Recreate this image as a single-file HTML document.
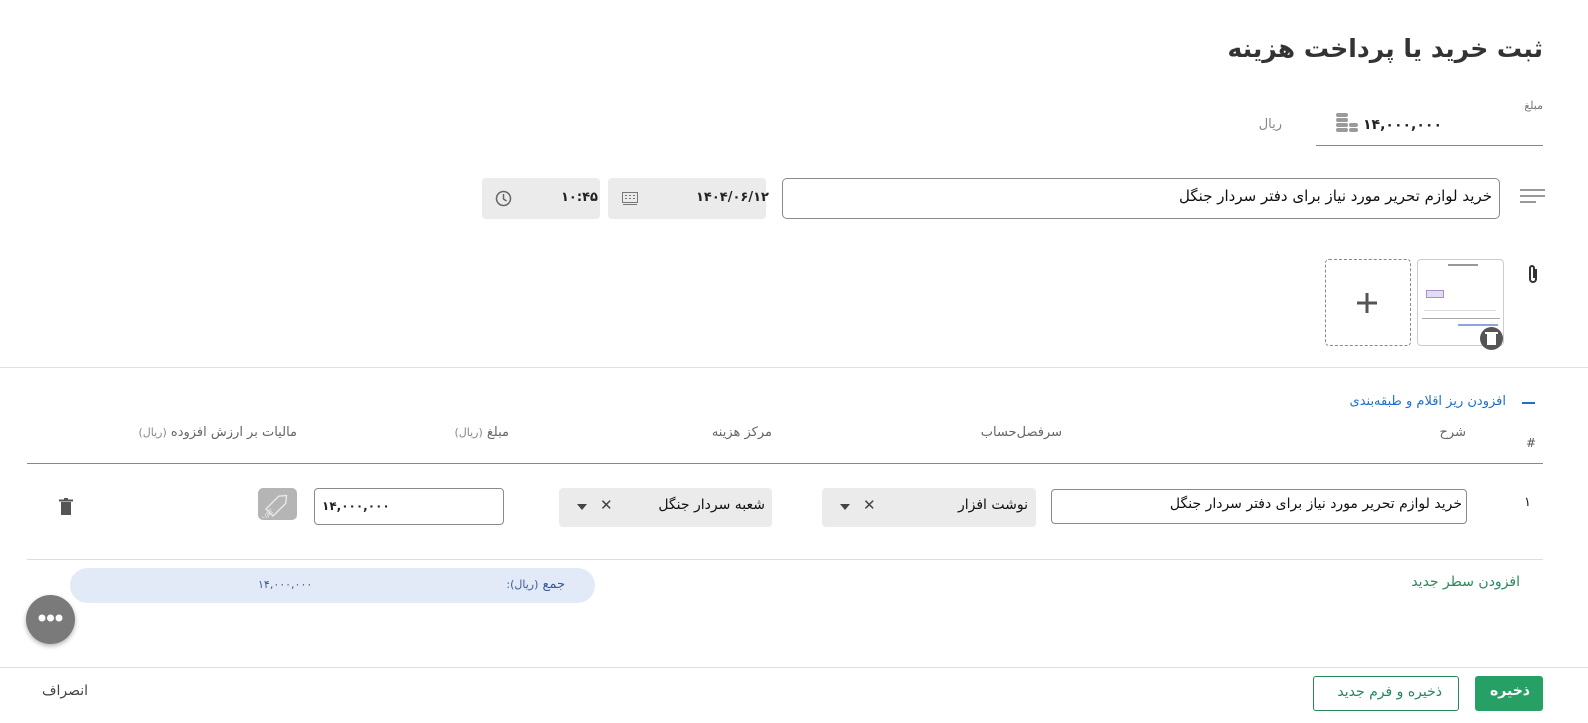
<!DOCTYPE html>
<html lang="fa" dir="rtl"><head><meta charset="utf-8">
<style>
*{box-sizing:border-box;margin:0;padding:0}
body{width:1588px;height:723px;background:#fff;font-family:"DejaVu Sans","Liberation Sans",sans-serif;color:#222;position:relative;overflow:hidden}
.a{position:absolute}
.r{direction:rtl;white-space:nowrap}
.box{position:absolute;border-radius:4px}
.gray{background:#ebebeb}
.inp{border:1px solid #8a8a8a;background:#fff}
</style></head><body>

<div class="a r" style="right:45px;top:34px;font-size:25px;font-weight:bold;color:#333">ثبت خرید یا پرداخت هزینه</div>
<div class="a r" style="right:45px;top:99px;font-size:11px;color:#777">مبلغ</div>
<div class="a" style="left:1316px;top:145px;width:227px;height:1px;background:#888"></div>
<div class="a" style="left:1363px;top:117px;font-size:14px;font-weight:bold;color:#222">۱۴,۰۰۰,۰۰۰</div>
<svg class="a" style="left:1336px;top:113px" width="22" height="20" viewBox="0 0 22 20"><g fill="#9a9a9a"><rect x="0" y="0" width="12" height="4" rx="2"/><rect x="0" y="5" width="12" height="4" rx="2"/><rect x="0" y="10" width="12" height="4" rx="2"/><rect x="0" y="15" width="12" height="4" rx="2"/><rect x="13" y="10" width="9" height="4" rx="2"/><rect x="13" y="15" width="9" height="4" rx="2"/></g></svg>
<div class="a r" style="right:306px;top:117px;font-size:13px;color:#888">ریال</div>

<svg class="a" style="left:1520px;top:189px" width="25" height="15"><g fill="#999"><rect y="0" width="25" height="2"/><rect y="6" width="25" height="2"/><rect y="12" width="16" height="2"/></g></svg>
<div class="box inp" style="left:782px;top:178px;width:718px;height:41px;border-radius:5px"></div>
<div class="a r" style="right:96px;top:187px;font-size:15px;color:#111">خرید لوازم تحریر مورد نیاز برای دفتر سردار جنگل</div>

<div class="box gray" style="left:608px;top:178px;width:158px;height:41px"></div>
<div class="a" style="left:696px;top:190px;font-size:13px;font-weight:bold">۱۴۰۴/۰۶/۱۲</div>
<svg class="a" style="left:622px;top:192px" width="16" height="14"><rect x="0.5" y="0.5" width="15" height="10" fill="none" stroke="#777"/><g fill="#777"><rect x="3" y="3" width="2" height="1"/><rect x="7" y="3" width="2" height="1"/><rect x="11" y="3" width="2" height="1"/><rect x="3" y="6" width="2" height="1"/><rect x="7" y="6" width="2" height="1"/><rect x="11" y="6" width="2" height="1"/><rect x="1" y="12" width="14" height="1"/></g></svg>
<div class="box gray" style="left:482px;top:178px;width:118px;height:41px"></div>
<div class="a" style="left:561px;top:190px;font-size:13px;font-weight:bold">۱۰:۴۵</div>
<svg class="a" style="left:495px;top:190px" width="17" height="17"><circle cx="8.5" cy="8.5" r="7" fill="none" stroke="#666" stroke-width="1.5"/><path d="M8.5 4v5l3 2" fill="none" stroke="#666" stroke-width="1.5"/></svg>

<svg class="a" style="left:1525px;top:264px" width="16" height="22" viewBox="0 0 16 22"><path d="M11 5v10a3 3 0 0 1-6 0V4a2 2 0 0 1 4 0v10" fill="none" stroke="#333" stroke-width="2"/></svg>
<div class="box" style="left:1417px;top:259px;width:87px;height:87px;border:1px solid #ccc;background:#fff;overflow:hidden">
 <div class="a" style="left:30px;top:4px;width:30px;height:2px;background:#999"></div>
 <div class="a" style="left:8px;top:30px;width:18px;height:8px;background:#e5dcf3;border:1px solid #a890c8"></div>
 <div class="a" style="left:6px;top:50px;width:72px;height:1px;background:#ddd"></div>
 <div class="a" style="left:4px;top:58px;width:78px;height:1px;background:#aaa"></div>
 <div class="a" style="left:40px;top:64px;width:40px;height:2px;background:#8aa6dd"></div>
</div>
<div class="a" style="left:1480px;top:327px;width:23px;height:23px;border-radius:50%;background:#555"></div>
<svg class="a" style="left:1485px;top:331px" width="13" height="15"><rect x="2" y="3" width="9" height="11" fill="#fff"/><rect x="0" y="1" width="13" height="2" fill="#fff"/></svg>
<div class="box" style="left:1325px;top:259px;width:86px;height:87px;border:1px dashed #888"></div>
<svg class="a" style="left:1357px;top:293px" width="20" height="20"><rect x="8.5" y="0" width="3" height="20" fill="#555"/><rect x="0" y="8.5" width="20" height="3" fill="#555"/></svg>

<div class="a" style="left:0;top:367px;width:1588px;height:1px;background:#e0e0e0"></div>

<div class="a" style="left:1522px;top:402px;width:13px;height:2px;background:#1f6fd0"></div>
<div class="a r" style="right:82px;top:394px;font-size:13px;color:#1f6fd0">افزودن ریز اقلام و طبقه‌بندی</div>

<div class="a" style="left:1526px;top:436px;font-size:12px;color:#555">#</div>
<div class="a r" style="right:122px;top:425px;font-size:13px;color:#666">شرح</div>
<div class="a r" style="right:526px;top:425px;font-size:13px;color:#666">سرفصل‌حساب</div>
<div class="a r" style="right:816px;top:425px;font-size:13px;color:#666">مرکز هزینه</div>
<div class="a r" style="right:1079px;top:425px;font-size:13px;color:#666">مبلغ <span style="font-size:11px;color:#888">(ریال)</span></div>
<div class="a r" style="right:1291px;top:425px;font-size:13px;color:#666">مالیات بر ارزش افزوده <span style="font-size:11px;color:#888">(ریال)</span></div>
<div class="a" style="left:27px;top:463px;width:1516px;height:1px;background:#888"></div>

<div class="a" style="left:1524px;top:495px;font-size:13px">۱</div>
<div class="box inp" style="left:1051px;top:489px;width:416px;height:35px"></div>
<div class="a r" style="right:126px;top:496px;font-size:14px;color:#111">خرید لوازم تحریر مورد نیاز برای دفتر سردار جنگل</div>

<div class="box gray" style="left:822px;top:488px;width:214px;height:39px"></div>
<div class="a r" style="right:560px;top:497px;font-size:14px;color:#111">نوشت افزار</div>
<div class="a" style="left:863px;top:496px;font-size:15px;color:#444">✕</div>
<svg class="a" style="left:840px;top:504px" width="10" height="6"><path d="M0 0h10L5 6z" fill="#444"/></svg>

<div class="box gray" style="left:559px;top:488px;width:213px;height:39px"></div>
<div class="a r" style="right:823px;top:497px;font-size:14px;color:#111">شعبه سردار جنگل</div>
<div class="a" style="left:600px;top:496px;font-size:15px;color:#444">✕</div>
<svg class="a" style="left:577px;top:504px" width="10" height="6"><path d="M0 0h10L5 6z" fill="#444"/></svg>

<div class="box inp" style="left:314px;top:488px;width:190px;height:37px"></div>
<div class="a" style="left:322px;top:499px;font-size:12px;font-weight:bold">۱۴,۰۰۰,۰۰۰</div>
<div class="box" style="left:258px;top:488px;width:39px;height:32px;background:#b5b5b5;border-radius:5px"></div>
<svg class="a" style="left:262px;top:490px" width="32" height="28"><g transform="rotate(-45 16 14)" fill="none" stroke="#e8e8e8" stroke-width="1.4"><path d="M4 9h18l6 5-6 5H4z"/><text x="8" y="17" font-size="7" fill="#e8e8e8" stroke="none" font-family="DejaVu Sans">VAT</text></g></svg>
<svg class="a" style="left:59px;top:498px" width="14" height="17"><rect x="2" y="4" width="10" height="13" fill="#555"/><rect x="0" y="1.5" width="14" height="2" fill="#555"/><rect x="5" y="0" width="4" height="2" fill="#555"/></svg>

<div class="a" style="left:27px;top:559px;width:1516px;height:1px;background:#ddd"></div>
<div class="a r" style="right:68px;top:574px;font-size:14px;color:#2a8a5e">افزودن سطر جدید</div>
<div class="box" style="left:70px;top:568px;width:525px;height:35px;background:#e3eaf7;border-radius:18px"></div>
<div class="a r" style="right:1023px;top:577px;font-size:13px;color:#3b5b99">جمع <span style="font-size:11px">(ریال):</span></div>
<div class="a" style="left:258px;top:578px;font-size:11px;color:#3b5b99">۱۴,۰۰۰,۰۰۰</div>

<div class="a" style="left:26px;top:595px;width:49px;height:49px;border-radius:50%;background:#7a7a7a;box-shadow:0 2px 5px rgba(0,0,0,.3)"></div>
<svg class="a" style="left:38px;top:613px" width="25" height="10"><circle cx="4" cy="5" r="3.5" fill="#fff"/><circle cx="12.5" cy="5" r="3.5" fill="#fff"/><circle cx="21" cy="5" r="3.5" fill="#fff"/></svg>

<div class="a" style="left:0;top:667px;width:1588px;height:1px;background:#ddd"></div>
<div class="box" style="left:1475px;top:676px;width:68px;height:35px;background:#27a066;border-radius:3px"></div>
<div class="a r" style="right:58px;top:683px;font-size:14px;color:#fff;font-weight:bold">ذخیره</div>
<div class="box" style="left:1313px;top:676px;width:146px;height:35px;border:1px solid #27855a;border-radius:3px"></div>
<div class="a r" style="right:146px;top:684px;font-size:14px;color:#27855a">ذخیره و فرم جدید</div>
<div class="a r" style="right:1500px;top:683px;font-size:14px;color:#444">انصراف</div>
</body></html>
